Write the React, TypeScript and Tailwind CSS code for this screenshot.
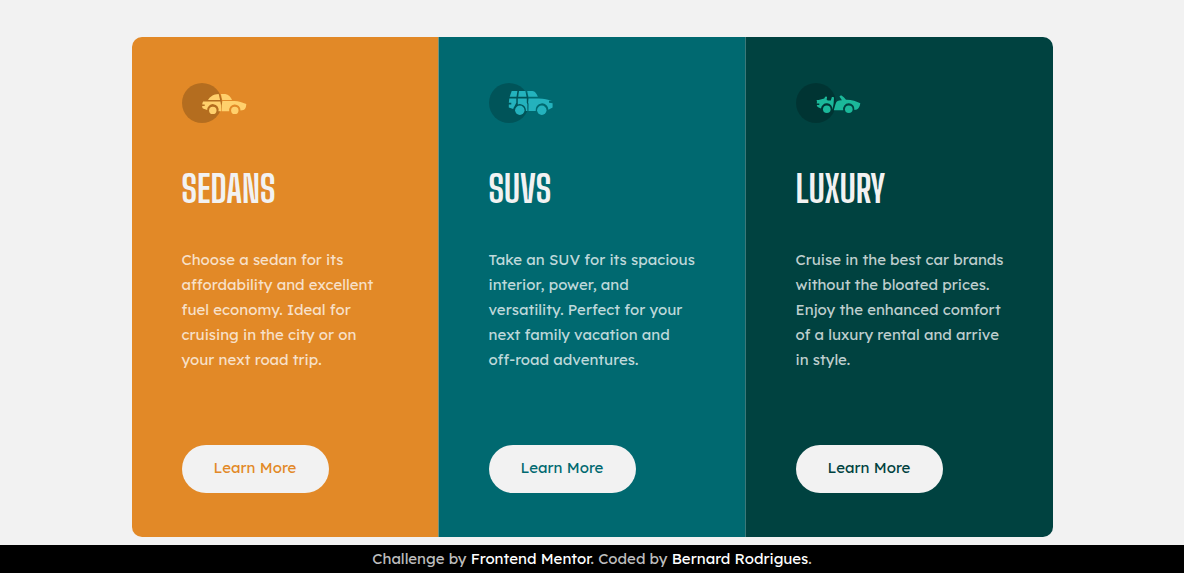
import type { ReactNode } from 'react';

type Plan = {
  name: string;
  text: string;
  panel: string;
  label: string;
  icon: ReactNode;
};

function Sedan() {
  return (
    <svg width="65" height="40" viewBox="0 0 65 40" aria-hidden="true">
      <circle cx="20" cy="20" r="20" fill="#000" fillOpacity="0.2" />
      <g fill="#FFD06C">
        <circle cx="30.8" cy="27.4" r="3.7" />
        <circle cx="52.8" cy="27.4" r="3.7" />
        <path d="M26 16.9C28.2 13.6 31.2 11.2 36.7 11l1.4 5.9z" />
        <path d="M38.9 11h4.5c3.2.4 5.2 3 6.6 5.9h-9.8z" />
        <path d="M21.2 18.4h17.2l.7 4.2v5.7h-2.7a5.7 5.7 0 1 0-11.2-1.2L21 25.4c-.7-.5-.9-1.6-.8-2.4h2.5v-1.4h-2.4c0-1.2.2-2.4.9-3.2z" />
        <path d="M40.4 17.9h12.1c4.1.2 8.1 1.6 11.8 3.2-.1 3.2-1 5.2-2.8 6l-3 .3a5.7 5.7 0 1 0-11.3.9h-7.5v-5.7z" />
      </g>
    </svg>
  );
}

function Suv() {
  return (
    <svg width="65" height="40" viewBox="0 0 65 40" aria-hidden="true">
      <circle cx="20" cy="20" r="20" fill="#000" fillOpacity="0.2" />
      <g fill="#24B2BD">
        <circle cx="30.8" cy="27.2" r="4.7" />
        <circle cx="52.8" cy="27.2" r="4.7" />
        <path d="M22.7 8h5.7l-.9 5.8h-6.8z" />
        <path d="M30 8h6.4l1.2 5.8h-8.4z" />
        <path d="M38.2 8h5.3c2.6.2 3.9 2.7 5.4 5.8h-9.5z" />
        <path d="M20.3 15.5h7v4.2l-1.8 3.6a7 7 0 0 0-1.3 2.6l-4.4-1.4v-3h2.5v-1.7h-2.5z" />
        <path d="M28.8 15.5h9v4.4l.6 1.2v6.8h-1.5a6.2 6.2 0 0 0-8.1-6.5z" />
        <path d="M39.5 15.5h10.2c5.4.2 9.4 1 13.3 2.2h-3v2.1l3.6.4v4.3l-4.2 2.2a6.4 6.4 0 1 0-12.7 1.2h-7.2v-7.1l-.4-1.1z" />
      </g>
    </svg>
  );
}

function Convertible() {
  return (
    <svg width="65" height="40" viewBox="0 0 65 40" aria-hidden="true">
      <circle cx="20" cy="20" r="20" fill="#000" fillOpacity="0.2" />
      <g fill="#1BB89A">
        <circle cx="30.8" cy="26.3" r="3.8" />
        <circle cx="52.8" cy="26.3" r="3.8" />
        <path d="M20.5 17.1c2.9 0 5.3-.8 7.8-1.6l.8-1.8 1.5-.3.5 1.1-.5 2 1.2.9h3l1.1-3.4 1.7-.1.4 1.1-.4 5.6c-.2 2.1-.8 4-1.2 5.9A5.6 5.6 0 0 0 25 25.6L21.6 24l-.9-2.1h2.6v-1.4h-2.6c.4-1.2.4-2.2-.2-3.4z" />
        <path d="M43.4 13.6l1.6-1.3c2.2 1.1 3.6 2.8 5 4.4 5.1-.2 10.6 1.7 14.3 3.5-.3 2.8-1.5 5.1-3.4 6.3l-2.5.4a5.7 5.7 0 1 0-11.2.3h-9.4l1.2-4.4c.8-3.2 1.6-5 4.3-5.3l2.6-.3z" />
      </g>
    </svg>
  );
}

const plans: Plan[] = [
  {
    name: 'Sedans',
    text: 'Choose a sedan for its affordability and excellent fuel economy. Ideal for cruising in the city or on your next road trip.',
    panel: 'bg-[#e28927] md:border-r border-[#75937e]',
    label: 'text-[#e28927]',
    icon: <Sedan />,
  },
  {
    name: 'SUVs',
    text: 'Take an SUV for its spacious interior, power, and versatility. Perfect for your next family vacation and off-road adventures.',
    panel: 'bg-[#006970] md:border-r border-[#3c7878]',
    label: 'text-[#006970]',
    icon: <Suv />,
  },
  {
    name: 'Luxury',
    text: 'Cruise in the best car brands without the bloated prices. Enjoy the enhanced comfort of a luxury rental and arrive in style.',
    panel: 'bg-[#004240]',
    label: 'text-[#004240]',
    icon: <Convertible />,
  },
];

export default function App() {
  return (
    <div className="flex min-h-screen flex-col bg-[#f2f2f2] font-['Lexend_Deca',sans-serif] text-[15px]">
      <main className="flex flex-1 items-start justify-center px-6 pt-[37px] pb-2">
        <div className="grid w-full max-w-[921px] overflow-hidden rounded-[10px] md:grid-cols-3">
          {plans.map((plan) => (
            <section key={plan.name} className={`flex flex-col items-start px-[50px] pt-[46px] pb-11 ${plan.panel}`}>
              {plan.icon}
              <h2 className="mt-[41px] font-['Big_Shoulders_Display',sans-serif] text-[38px] leading-[50px] font-bold text-[#f2f2f2] uppercase">
                {plan.name}
              </h2>
              <p className="mt-[33px] min-h-[125px] leading-[25px] text-white/75 md:-mr-1">{plan.text}</p>
              <button
                type="button"
                className={`mt-[73px] h-12 w-[147px] cursor-pointer rounded-full bg-[#f2f2f2] pb-0.5 ${plan.label}`}
              >
                Learn More
              </button>
            </section>
          ))}
        </div>
      </main>
      <footer className="bg-black text-center leading-7 text-white/75">
        Challenge by{' '}
        <a href="https://www.frontendmentor.io" className="text-white">
          Frontend Mentor
        </a>
        . Coded by{' '}
        <a href="#author" className="text-white">
          Bernard Rodrigues
        </a>
        .
      </footer>
    </div>
  );
}
